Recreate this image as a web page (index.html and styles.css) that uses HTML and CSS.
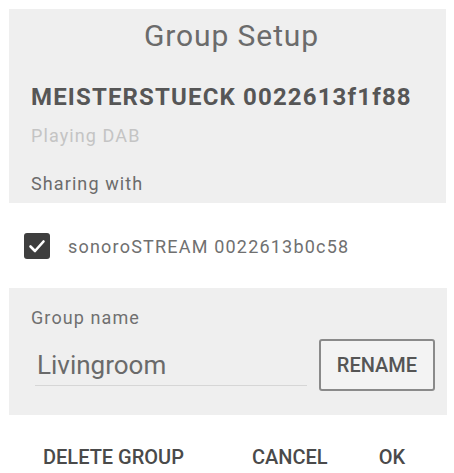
FILE: index.html
```html
<!DOCTYPE html>
<html>
<head>
<meta charset="utf-8">
<link rel="stylesheet" href="styles.css">
</head>
<body>
<div class="dialog">
  <section class="panel info">
    <h1 class="title">Group Setup</h1>
    <div class="device">MEISTERSTUECK 0022613f1f88</div>
    <div class="status">Playing DAB</div>
    <div class="sharing">Sharing with</div>
  </section>
  <label class="member">
    <span class="check">
      <svg viewBox="0 0 26 26" width="26" height="26"><path d="M6.5 13.5 L11 18 L19.5 8.5" fill="none" stroke="#fff" stroke-width="2.6" stroke-linecap="round" stroke-linejoin="round"/></svg>
    </span>
    <span class="member-name">sonoroSTREAM 0022613b0c58</span>
  </label>
  <section class="panel name">
    <div class="name-label">Group name</div>
    <div class="name-row">
      <div class="field">Livingroom</div>
      <button class="rename">RENAME</button>
    </div>
  </section>
  <div class="actions">
    <span class="btn delete">DELETE GROUP</span>
    <span class="btn cancel">CANCEL</span>
    <span class="btn ok">OK</span>
  </div>
</div>
</body>
</html>
```
FILE: styles.css
```css
html, body {
  margin: 0;
  padding: 0;
  background: #ffffff;
}
body {
  font-family: Roboto, "Liberation Sans", sans-serif;
  width: 454px;
  height: 473px;
  overflow: hidden;
}
.dialog {
  padding: 9px 8px 0 9px;
  display: flex;
  flex-direction: column;
}
.panel {
  background: #efefef;
}
.info {
  padding: 10px 0 8px 22px;
  height: 194px;
  box-sizing: border-box;
}
.title {
  margin: 0 0 0 -22px;
  font-size: 30px;
  font-weight: 400;
  line-height: 34px;
  letter-spacing: 0.9px;
  text-align: center;
  color: #6b6b6b;
  padding-left: 8px;
}
.device {
  margin-top: 30px;
  font-size: 24px;
  font-weight: 700;
  line-height: 28px;
  letter-spacing: 1.15px;
  color: #565656;
}
.status {
  margin-top: 14px;
  font-size: 18px;
  line-height: 22px;
  letter-spacing: 1.1px;
  color: #c4c4c4;
}
.sharing {
  margin-top: 26px;
  font-size: 18px;
  line-height: 22px;
  letter-spacing: 1.1px;
  color: #6b6b6b;
}
.member {
  display: flex;
  align-items: center;
  height: 85px;
  padding-left: 15px;
  gap: 18px;
}
.check {
  width: 26px;
  height: 26px;
  border-radius: 3px;
  background: #3e3e3e;
  display: block;
}
.check svg { display: block; }
.member-name {
  font-size: 18px;
  letter-spacing: 1.2px;
  color: #707070;
  margin-top: 2px;
}
.name {
  margin-right: -1px;
  height: 127px;
  box-sizing: border-box;
  padding: 19px 12px 0 22px;
}
.name-label {
  font-size: 18px;
  line-height: 22px;
  letter-spacing: 1.1px;
  color: #707070;
}
.name-row {
  display: flex;
  align-items: center;
  margin-top: 10px;
}
.field {
  width: 272px;
  margin-left: 4px;
  font-size: 26px;
  line-height: 34px;
  color: #6a6a6a;
  border-bottom: 1.5px solid #d6d6d6;
  padding: 0 0 3px 2px;
  box-sizing: border-box;
  margin-top: 4px;
}
.rename {
  margin-left: auto;
  width: 116px;
  height: 52px;
  border: 2px solid #8a8a8a;
  border-radius: 3px;
  background: #f3f3f3;
  font-family: Roboto, "Liberation Sans", sans-serif;
  font-size: 20px;
  font-weight: 500;
  color: #555;
  padding: 0;
}
.actions {
  display: flex;
  align-items: center;
  padding-left: 34px;
  margin-top: 30px;
}
.btn {
  font-size: 20px;
  font-weight: 500;
  color: #4a4a4a;
  line-height: 24px;
}
.cancel { margin-left: 68px; }
.ok { margin-left: 51px; }
```
